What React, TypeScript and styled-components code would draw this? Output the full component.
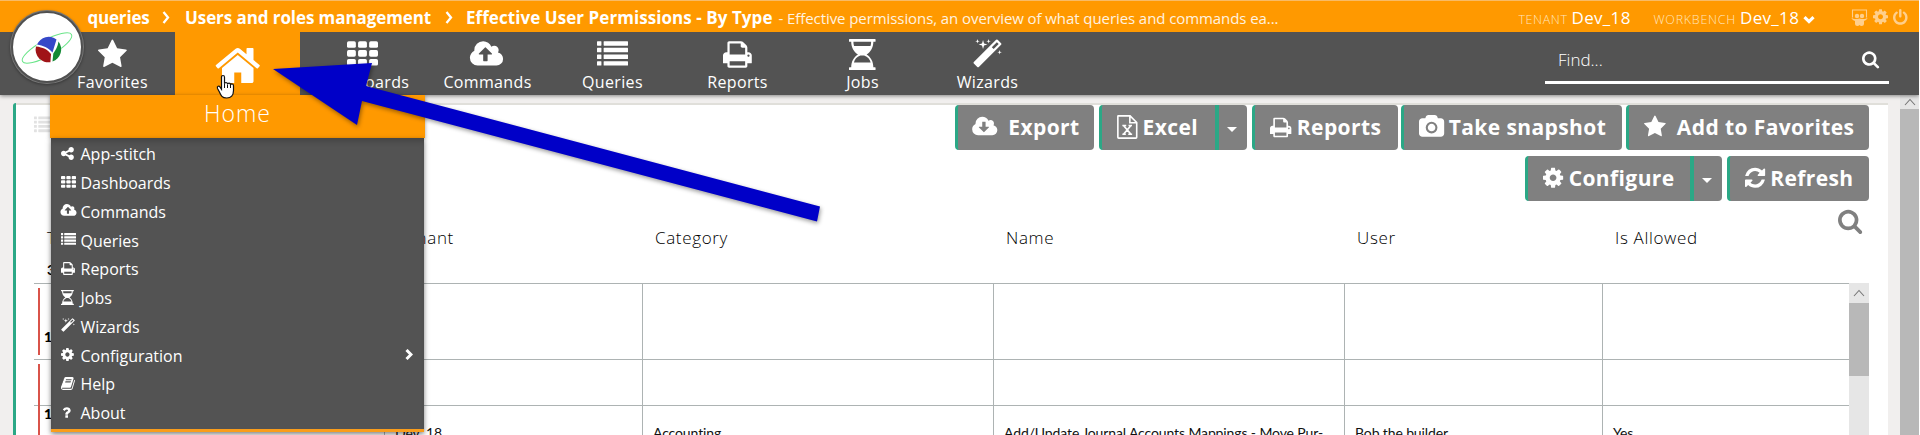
import React from "react";
import styled, { createGlobalStyle } from "styled-components";

const orange = "#ff9900";
const dark = "#535353";
const green = "#2ba886";
const line = "#adb3b3";

const GlobalStyle = createGlobalStyle`
  * { box-sizing: border-box; }
  body {
    margin: 0;
    overflow: hidden;
    background: #f1efee;
    font-family: "Open Sans", "Noto Sans", sans-serif;
  }
`;

/* ---------- icons ---------- */

type Glyph = { x: number; w: number; d: string };

const glyphs: Record<string, Glyph> = {
  star: { x: 64, w: 1664, d: "M1728 647q0 22-26 48l-363 354 86 500q1 7 1 20 0 21-10.500 35.500t-30.500 14.500q-19 0-40-12l-449-236-449 236q-22 12-40 12-21 0-31.500-14.500t-10.500-35.500q0-6 2-20l86-500-364-354q-25-27-25-48 0-37 56-46l502-73 225-455q19-41 49-41t49 41l225 455 502 73q56 9 56 46z" },
  search: { x: 64, w: 1664, d: "M1216 832q0-185-131.500-316.500t-316.500-131.500-316.500 131.500-131.500 316.500 131.500 316.500 316.500 131.500 316.500-131.500 131.500-316.500zm512 832q0 52-38 90t-90 38q-54 0-90-38l-343-342q-179 124-399 124-143 0-273.500-55.500t-225-150-150-225-55.500-273.500 55.500-273.500 150-225 225-150 273.500-55.500 273.500 55.500 225 150 150 225 55.500 273.500q0 220-124 399l343 343q37 37 37 90z" },
  cog: { x: 128, w: 1536, d: "M1152 896q0-106-75-181t-181-75-181 75-75 181 75 181 181 75 181-75 75-181zm512-109v222q0 12-8 23t-20 13l-185 28q-19 54-39 91 35 50 107 138 10 12 10 25t-9 23q-27 37-99 108t-94 71q-12 0-26-9l-138-108q-44 23-91 38-16 136-29 186-7 28-36 28h-222q-14 0-24.500-8.500t-11.500-21.500l-28-184q-49-16-90-37l-141 107q-10 9-25 9-14 0-25-11-126-114-165-168-7-10-7-23 0-12 8-23 15-21 51-66.500t54-70.500q-27-50-41-99l-183-27q-13-2-21-12.500t-8-23.500v-222q0-12 8-23t19-13l186-28q14-46 39-92-40-57-107-138-10-12-10-24 0-10 9-23 26-36 98.500-107.500t94.500-71.500q13 0 26 10l138 107q44-23 91-38 16-136 29-186 7-28 36-28h222q14 0 24.500 8.500t11.500 21.500l28 184q49 16 90 37l142-107q9-9 24-9 13 0 25 10 129 119 165 170 7 8 7 22 0 12-8 23-15 21-51 66.500t-54 70.500q26 50 41 98l183 28q13 2 21 12.500t8 23.500z" },
  home: { x: 64, w: 1664, d: "M1472 992v480q0 26-19 45t-45 19h-384v-384h-256v384h-384q-26 0-45-19t-19-45v-480q0-1 .5-3t.5-3l575-474 575 474q1 2 1 6zm223-69l-62 74q-8 9-21 11h-3q-13 0-21-7l-692-577-692 577q-12 8-24 7-13-2-21-11l-62-74q-8-10-7-23.500t11-21.500l719-599q32-26 76-26t76 26l244 204v-195q0-14 9-23t23-9h192q14 0 23 9t9 23v408l219 182q10 8 11 21.500t-7 23.500z" },
  power: { x: 128, w: 1536, d: "M1664 896q0 156-61 298t-164 245-245 164-298 61-298-61-245-164-164-245-61-298q0-182 80.500-343t226.500-270q43-32 95.500-25t83.500 50q32 42 24.500 94.500t-49.500 84.500q-98 74-151.500 181t-53.500 228q0 104 40.500 198.500t109.500 163.500 163.500 109.500 198.500 40.500 198.500-40.500 163.500-109.500 109.500-163.500 40.500-198.500q0-121-53.500-228t-151.500-181q-42-32-49.500-84.500t24.500-94.500q31-43 84-50t95 25q146 109 226.500 270t80.500 343zm-640-768v640q0 52-38 90t-90 38-90-38-38-90v-640q0-52 38-90t90-38 90 38 38 90z" },
  refresh: { x: 128, w: 1536, d: "M1639 1056q0 5-1 7-64 268-268 434.500t-478 166.500q-146 0-282.500-55t-243.500-157l-129 129q-19 19-45 19t-45-19-19-45v-448q0-26 19-45t45-19h448q26 0 45 19t19 45-19 45l-137 137q71 66 161 102t187 36q134 0 250-65t186-179q11-17 53-117 8-23 30-23h192q13 0 22.500 9.500t9.500 22.500zm25-800v448q0 26-19 45t-45 19h-448q-26 0-45-19t-19-45 19-45l138-138q-148-137-349-137-134 0-250 65t-186 179q-11 17-53 117-8 23-30 23h-199q-13 0-22.500-9.500t-9.500-22.500v-7q65-268 270-434.500t480-166.500q146 0 284 55.500t245 156.500l130-129q19-19 45-19t45 19 19 45z" },
  share: { x: 128, w: 1536, d: "M1344 1024q133 0 226.500 93.500t93.500 226.500-93.500 226.500-226.500 93.500-226.500-93.500-93.500-226.500q0-12 2-34l-360-180q-92 86-218 86-133 0-226.500-93.500t-93.500-226.500 93.500-226.500 226.500-93.500q126 0 218 86l360-180q-2-22-2-34 0-133 93.500-226.500t226.500-93.500 226.500 93.500 93.500 226.500-93.500 226.500-226.500 93.500q-126 0-218-86l-360 180q2 22 2 34t-2 34l360 180q92-86 218-86z" },
  print: { x: 64, w: 1664, d: "M448 1536h896v-256h-896v256zm0-640h896v-384h-160q-40 0-68-28t-28-68v-160h-640v640zm1152 64q0-26-19-45t-45-19-45 19-19 45 19 45 45 19 45-19 19-45zm128 0v416q0 13-9.500 22.500t-22.500 9.500h-224v160q0 40-28 68t-68 28h-960q-40 0-68-28t-28-68v-160h-224q-13 0-22.500-9.500t-9.500-22.500v-416q0-79 56.500-135.500t135.500-56.500h64v-544q0-40 28-68t68-28h672q40 0 88 20t76 48l152 152q28 28 48 76t20 88v256h64q79 0 135.500 56.500t56.500 135.500z" },
  cloudUp: { x: 0, w: 1856, d: "M1216 864q0-14-9-23l-352-352q-9-9-23-9t-23 9l-351 351q-10 12-10 24 0 14 9 23t23 9h224v352q0 13 9.500 22.500t22.500 9.500h192q13 0 22.500-9.500t9.500-22.500v-352h224q13 0 22.500-9.500t9.500-22.500zm640 288q0 159-112.500 271.500t-271.500 112.500h-1088q-185 0-316.500-131.500t-131.500-316.500q0-130 70-240t188-165q-2-30-2-43 0-212 150-362t362-150q156 0 285.500 87t188.500 231q71-62 166-62 106 0 181 75t75 181q0 76-41 138 130 31 213.500 135.500t83.500 238.500z" },
  cloudDown: { x: 0, w: 1856, d: "M1216 928q0-14-9-23t-23-9h-224v-352q0-13-9.500-22.500t-22.500-9.500h-192q-13 0-22.500 9.500t-9.500 22.500v352h-224q-13 0-22.500 9.500t-9.500 22.500q0 14 9 23l352 352q9 9 23 9t23-9l351-351q10-12 10-24zm640 224q0 159-112.500 271.500t-271.500 112.500h-1088q-185 0-316.500-131.500t-131.500-316.500q0-130 70-240t188-165q-2-30-2-43 0-212 150-362t362-150q156 0 285.500 87t188.500 231q71-62 166-62 106 0 181 75t75 181q0 76-41 138 130 31 213.500 135.500t83.500 238.500z" },
  magic: { x: 60, w: 1668, d: "M1254 581l293-293-107-107-293 293zm447-293q0 27-18 45l-1286 1286q-18 18-45 18t-45-18l-198-198q-18-18-18-45t18-45l1286-1286q18-18 45-18t45 18l198 198q18 18 18 45zm-1351-190l98 30-98 30-30 98-30-98-98-30 98-30 30-98zm350 162l196 60-196 60-60 196-60-196-196-60 196-60 60-196zm930 478l98 30-98 30-30 98-30-98-98-30 98-30 30-98zm-640-640l98 30-98 30-30 98-30-98-98-30 98-30 30-98z" },
  camera: { x: -64, w: 1920, d: "M896 672q119 0 203.500 84.500t84.500 203.500-84.500 203.500-203.500 84.500-203.500-84.500-84.500-203.500 84.500-203.500 203.500-84.500zm704-416q106 0 181 75t75 181v896q0 106-75 181t-181 75h-1408q-106 0-181-75t-75-181v-896q0-106 75-181t181-75h224l51-136q19-49 69.500-84.500t103.500-35.500h512q53 0 103.500 35.500t69.500 84.500l51 136h224zm-704 1152q185 0 316.500-131.500t131.500-316.500-131.500-316.500-316.500-131.500-316.500 131.500-131.500 316.500 131.500 316.500 316.500 131.500z" },
  book: { x: 64, w: 1664, d: "M1703 478q40 57 18 129l-275 906q-19 64-76.500 107.500t-122.500 43.500h-923q-77 0-148.500-53.500t-99.500-131.500q-24-67-2-127 0-4 3-27t4-37q1-8-3-21.500t-3-19.500q2-11 8-21t16.500-23.500 16.500-23.500q23-38 45-91.500t30-91.500q3-10 .5-30t-.5-28q3-11 17-28t17-23q21-36 42-92t25-90q1-9-2.500-32t.5-28q4-13 22-30.500t22-22.500q19-26 42.500-84.500t27.500-96.500q1-8-3-25.500t-2-26.500q2-8 9-18t18-23 17-21q8-12 16.500-30.500t15-35 16-36 19.500-32 26.500-23.500 36-11.500 47.500 5.500l-1 3q38-9 51-9h761q74 0 114 56t18 130l-274 906q-36 119-71.500 153.500t-128.500 34.500h-869q-27 0-38 15-11 16-1 43 24 70 144 70h923q29 0 56-15.500t35-41.500l300-987q7-22 5-57 38 15 59 43zm-1064 2q-4 13 2 22.500t20 9.500h608q13 0 25.500-9.500t16.500-22.500l21-64q4-13-2-22.500t-20-9.500h-608q-13 0-25.500 9.500t-16.500 22.500zm-83 256q-4 13 2 22.500t20 9.500h608q13 0 25.500-9.500t16.500-22.500l21-64q4-13-2-22.500t-20-9.500h-608q-13 0-25.500 9.500t-16.500 22.500z" },
  question: { x: 250, w: 1300, d: "M1088 1256v240q0 16-12 28t-28 12h-240q-16 0-28-12t-12-28v-240q0-16 12-28t28-12h240q16 0 28 12t12 28zm316-600q0 54-15.500 101t-35 76.500-55 59.500-57.500 43.500-61 35.500q-41 23-68.500 65t-27.500 67q0 17-12 32.500t-28 15.500h-240q-15 0-25.500-18.500t-10.500-37.500v-45q0-83 65-156.500t143-108.500q59-27 84-56t25-76q0-42-46.500-74t-107.500-32q-65 0-108 29-35 25-107 115-13 16-31 16-12 0-25-8l-164-125q-13-10-15.500-25t5.500-28q160-266 464-266 80 0 161 31t146 83 106 127.500 41 158.500z" },
};

const Svg = styled.svg`
  display: block;
  flex: none;
  overflow: visible;
  fill: currentColor;
`;

function Icon({ name, size }: { name: string; size: number }) {
  if (name === "th" || name === "list") {
    const rowsY = name === "th" ? [128, 640, 1152] : [128, 512, 896, 1280];
    return (
      <Svg width={size} height={size} viewBox="0 0 1792 1792">
        {rowsY.map((y) =>
          name === "th" ? (
            [0, 640, 1280].map((x) => <rect key={`${x}-${y}`} x={x} y={y} width="512" height="384" rx="96" />)
          ) : (
            <React.Fragment key={y}>
              <rect x="0" y={y} width="256" height="256" rx="32" />
              <rect x="384" y={y} width="1408" height="256" rx="32" />
            </React.Fragment>
          )
        )}
      </Svg>
    );
  }
  if (name === "hourglass") {
    return (
      <Svg width={(size * 1536) / 1792} height={size} viewBox="0 0 1536 1792">
        <path
          fillRule="evenodd"
          d="M32 0h1472q32 0 32 32v96q0 32-32 32h-96c0 330-150 590-390 736 240 146 390 406 390 736h96q32 0 32 32v96q0 32-32 32H32q-32 0-32-32v-96q0-32 32-32h96c0-330 150-590 390-736C278 750 128 490 128 160H32q-32 0-32-32V32Q0 0 32 0zM256 160c0 90 12 160 36 240h952c24-80 36-150 36-240zM660 960c-220 90-330 220-376 400h968c-46-180-156-310-376-400z"
        />
      </Svg>
    );
  }
  if (name === "excel") {
    return (
      <Svg width={(size * 1536) / 1792} height={size} viewBox="0 0 1536 1792">
        <path
          d="M96 64h880l496 496v1104q0 64-64 64H128q-64 0-64-64V96q0-32 32-32zM960 64v512h512"
          fill="none"
          stroke="currentColor"
          strokeWidth="120"
        />
        <path
          d="M500 800L1030 1420M1030 800L500 1420M400 785h290M860 785h260M400 1435h260M840 1435h290"
          fill="none"
          stroke="currentColor"
          strokeWidth="125"
        />
      </Svg>
    );
  }
  const g = glyphs[name];
  return (
    <Svg width={(size * g.w) / 1792} height={size} viewBox={`${g.x} 0 ${g.w} 1792`}>
      <path d={g.d} />
    </Svg>
  );
}

function Slideshare() {
  return (
    <Svg width="17" height="17" viewBox="0 0 17 17">
      <path d="M1.500 8.500V1h14v7.500" fill="none" stroke="currentColor" strokeWidth="1.100" />
      <circle cx="6" cy="7" r="2.200" />
      <circle cx="11" cy="7" r="2.200" />
      <path d="M.3 8.800c2.300 1.500 4.700 1.500 8.200.7 3.500.8 5.900.8 8.200-.7-.8 1.900-2.400 2.900-3.700 3.200V15q-.2 2-2.200 2-1.600 0-2.300-1Q7.800 17 6.200 17 4.200 17 4 15v-3C2.700 11.700 1.100 10.700.3 8.800z" />
    </Svg>
  );
}

/* ---------- header ---------- */

const Header = styled.header`
  position: relative;
  z-index: 2;
  width: 1919px;
  box-shadow: 0 1px 4px rgba(0, 0, 0, 0.45);
`;

const TopBar = styled.div`
  display: flex;
  align-items: center;
  height: 32px;
  padding: 1px 11px 0 87.5px;
  border-top: 1px solid #f8bb66;
  background: ${orange};
  color: #fff;
`;

const Crumb = styled.span<{ $w: number; $track?: number }>`
  width: ${(p) => p.$w}px;
  font-size: 17px;
  font-weight: 700;
  white-space: nowrap;
  letter-spacing: ${(p) => p.$track ?? 0}px;
`;

const CrumbArrow = styled.svg<{ $gap: number }>`
  width: 8px;
  height: 13px;
  margin: 0 ${(p) => p.$gap}px 0 11px;
  fill: none;
  stroke: #fff;
  stroke-width: 2.3;
`;

const Description = styled.span`
  flex: 1;
  margin-left: 5.5px;
  padding-top: 1px;
  font-size: 15px;
  letter-spacing: -0.08px;
  white-space: nowrap;
  color: #fff3e0;
`;

const Context = styled.div<{ $w: number }>`
  display: flex;
  align-items: baseline;
  gap: 4px;
  width: ${(p) => p.$w}px;
  font-size: 17px;
  letter-spacing: 0.3px;
  white-space: nowrap;
`;

const ContextLabel = styled.span<{ $track: number }>`
  font-size: 12.5px;
  font-weight: 300;
  letter-spacing: ${(p) => p.$track}px;
  color: #ffe4bd;
`;

const DownArrow = styled.svg`
  width: 12px;
  height: 8px;
  fill: none;
  stroke: #fff;
  stroke-width: 3.2;
`;

const Tools = styled.div`
  display: flex;
  align-items: center;
  gap: 5px;
  color: #ffcf8c;
`;

const NavBar = styled.nav`
  display: flex;
  height: 63px;
  padding-left: 50px;
  background: ${dark};
  color: #fff;
`;

const NavItem = styled.div`
  display: flex;
  flex-direction: column;
  align-items: center;
  width: 125px;
  padding-top: 7px;
  font-size: 16px;
  line-height: 24px;
  letter-spacing: 0.35px;
`;

const HomeItem = styled.div`
  position: relative;
  display: flex;
  justify-content: center;
  width: 125px;
  padding-top: 9px;
  background: ${orange};
`;

const Dropdown = styled.div`
  position: absolute;
  top: 63px;
  left: -125px;
  width: 375px;
`;

const DropdownTitle = styled.div`
  height: 43px;
  background: ${orange};
  font-size: 23px;
  font-weight: 300;
  line-height: 36px;
  letter-spacing: 1px;
  text-align: center;
  box-shadow: 0 1px 4px rgba(0, 0, 0, 0.4);
`;

const Menu = styled.ul`
  height: 294px;
  margin: 0 1px;
  padding: 2px 0 0;
  list-style: none;
  background: ${dark};
  border-bottom: 3px solid #f99d1c;
  box-shadow: 0 2px 5px rgba(0, 0, 0, 0.5), inset 0 6px 6px -3px rgba(0, 0, 0, 0.2);
`;

const MenuItem = styled.li`
  display: flex;
  align-items: center;
  height: 28.75px;
  padding: 0 11px 0 10px;
  font-size: 16px;
`;

const MenuIcon = styled.span`
  width: 19.5px;
  margin-top: -2px;
`;

const MenuLabel = styled.span`
  flex: 1;
`;

const SubArrow = styled.svg`
  width: 8px;
  height: 11px;
  margin-top: -3px;
  fill: none;
  stroke: #fff;
  stroke-width: 3;
`;

const SearchBox = styled.div`
  display: flex;
  align-items: center;
  justify-content: space-between;
  width: 344px;
  height: 47px;
  margin: 5px 30px 0 auto;
  padding: 0 10px 0 13px;
  border-bottom: 3px solid #fff;
  font-size: 17px;
  font-weight: 300;
`;

const Logo = styled.div`
  position: absolute;
  z-index: 4;
  top: 11px;
  left: 11px;
  width: 72px;
  height: 72px;
  border: 2px solid #505050;
  border-radius: 50%;
  background: #fff;
  box-shadow: 0 0 0 1px #777, 0 1px 3px 1px rgba(0, 0, 0, 0.35);
`;

const menuItems: [string, string][] = [
  ["share", "App-stitch"],
  ["th", "Dashboards"],
  ["cloudUp", "Commands"],
  ["list", "Queries"],
  ["print", "Reports"],
  ["hourglass", "Jobs"],
  ["magic", "Wizards"],
  ["cog", "Configuration"],
  ["book", "Help"],
  ["question", "About"],
];

const navItems: [string, string][] = [
  ["th", "Dashboards"],
  ["cloudUp", "Commands"],
  ["list", "Queries"],
  ["print", "Reports"],
  ["hourglass", "Jobs"],
  ["magic", "Wizards"],
];

/* ---------- page ---------- */

const Page = styled.div`
  position: relative;
  width: 1920px;
  height: 435px;
  overflow: hidden;
  border-right: 1px solid #fff;
`;

const Body = styled.div`
  display: flex;
  height: 340px;
  padding-left: 13px;
`;

const Panel = styled.main`
  width: 1875px;
  height: 332px;
  margin-top: 8px;
  border-left: 3px solid ${green};
  border-top-left-radius: 3px;
  background: #fff;
`;

const PanelEdge = styled.div`
  height: 2px;
  background: #e0dfda;
`;

const PanelTop = styled.div`
  display: flex;
  justify-content: space-between;
  height: 98px;
  padding: 0 19px 0 18px;
`;

const PanelMark = styled.div`
  padding-top: 10px;
  color: #e2e2e2;
`;

const Toolbar = styled.div`
  display: flex;
  flex-direction: column;
  align-items: flex-end;
  gap: 6px;
`;

const ToolRow = styled.div`
  display: flex;
`;

const Button = styled.div<{ $w: number; $gap: number; $ml?: number; $split?: boolean }>`
  display: flex;
  align-items: center;
  gap: ${(p) => p.$gap}px;
  width: ${(p) => p.$w}px;
  height: 45px;
  margin-left: ${(p) => p.$ml ?? 5}px;
  padding: 0 0 1px 14.5px;
  border-left: 3px solid ${green};
  border-radius: ${(p) => (p.$split ? "4px 0 0 4px" : "4px")};
  background: #808080;
  color: #fff;
  font-size: 21px;
  font-weight: 700;
  letter-spacing: 0.4px;
  white-space: nowrap;
`;

const Caret = styled.div`
  display: flex;
  align-items: center;
  justify-content: center;
  width: 32px;
  height: 45px;
  border-left: 4px solid ${green};
  border-radius: 0 4px 4px 0;
  background: #808080;

  &::after {
    content: "";
    margin: 3px 2px 0 0;
    border: 5px solid transparent;
    border-top-color: #fff;
    border-bottom: 0;
  }
`;

const columns = "350px 258px 351px 351px 258px 1fr";

const HeadRow = styled.div`
  display: grid;
  grid-template-columns: ${columns};
  height: 80px;
  padding: 0 19px 0 18px;
  color: #000;
`;

const HeadCell = styled.div`
  display: flex;
  justify-content: space-between;
  padding: 23px 0 0 13px;
  font-size: 17px;
  font-weight: 300;
  line-height: 23px;
  letter-spacing: 0.65px;
`;

const Count = styled.span`
  display: block;
  margin-top: 11px;
  font: 700 14px/20px Lato, sans-serif;
  color: #000;
`;

const Filter = styled.span`
  margin: -18px 7px 0 0;
  color: #808080;
`;

const Table = styled.div`
  display: flex;
  height: 152px;
  margin: 0 19px 0 18px;
`;

const Rows = styled.div`
  width: 1815px;
`;

const Row = styled.div<{ $h: number }>`
  display: grid;
  grid-template-columns: ${columns};
  height: ${(p) => p.$h}px;
  border-top: 1px solid ${line};
`;

const Cell = styled.div`
  padding: 18px 0 0 10px;
  border-left: 1px solid ${line};
  font: 14px/18px Lato, "Open Sans", sans-serif;
  letter-spacing: -0.12px;
  white-space: nowrap;
  color: #111;

  &:first-child {
    padding: 0;
    border-left: 0;
  }
`;

const Group = styled.div<{ $h: number; $pad: number }>`
  height: ${(p) => p.$h}px;
  margin: 4px 0 0 4px;
  padding: ${(p) => p.$pad}px 0 0 4px;
  border-left: 2px solid #d9534a;
  font-weight: 900;
  color: #000;
`;

const ScrollTrack = styled.div<{ $w: number; $edge?: boolean }>`
  width: ${(p) => p.$w}px;
  margin-left: ${(p) => (p.$edge ? "12px" : 0)};
  background: #e6e6e6;
`;

const ScrollArrow = styled.div<{ $h: number }>`
  display: flex;
  align-items: center;
  justify-content: center;
  height: ${(p) => p.$h}px;
`;

const ScrollThumb = styled.div<{ $h: number }>`
  height: ${(p) => p.$h}px;
  background: #b8b8b8;
`;

/* ---------- annotations drawn over the page ---------- */

const Pointer = styled.svg`
  position: absolute;
  z-index: 5;
  top: 0;
  left: 0;
  width: 840px;
  height: 240px;
  filter: drop-shadow(1px 2px 2px rgba(0, 0, 0, 0.4));
`;

const HandCursor = styled.svg`
  position: absolute;
  z-index: 5;
  top: 74px;
  left: 216px;
  width: 20px;
  height: 26px;
`;

function Up() {
  return (
    <svg width="12" height="8" viewBox="0 0 12 8" fill="none" stroke="#777" strokeWidth="1.100">
      <path d="M1 7l5-5.500L11 7" />
    </svg>
  );
}

function Brand() {
  return (
    <Logo>
      <svg width="68" height="68" viewBox="13 13 68 68">
        <ellipse cx="47" cy="48" rx="28" ry="8" transform="rotate(-29 47 48)" fill="none" stroke="#6be58a" strokeWidth="1" />
        <circle cx="48.500" cy="49.500" r="12.800" fill="#fff" />
        <path d="M37 44.500a12.800 12.800 0 0 1 19.500-5L52.500 52.500C48 47.500 43 45.500 37 44.500z" fill="#3548c8" />
        <path d="M36 46.500c7 .8 11.500 3 15 7.500l-.6 8.200A12.800 12.800 0 0 1 36 46.500z" fill="#a01418" />
        <path d="M58.500 41.500a12.800 12.800 0 0 1-6 20l.8-8c2.500-3.500 4.500-7 5.200-12z" fill="#148a35" />
      </svg>
    </Logo>
  );
}

export default function App() {
  return (
    <Page>
      <GlobalStyle />
      <Header>
        <TopBar>
          <Crumb $w={63} $track={-0.2}>queries</Crumb>
          <CrumbArrow $gap={15.5} viewBox="0 0 8 13"><path d="M1.500 1l4.500 5.500L1.500 12" /></CrumbArrow>
          <Crumb $w={248.5} $track={-0.08}>Users and roles management</Crumb>
          <CrumbArrow $gap={13.5} viewBox="0 0 8 13"><path d="M1.500 1l4.500 5.500L1.500 12" /></CrumbArrow>
          <Crumb $w={307} $track={0.06}>Effective User Permissions - By Type</Crumb>
          <Description>- Effective permissions, an overview of what queries and commands ea...</Description>
          <Context $w={135}>
            <ContextLabel $track={0.6}>TENANT</ContextLabel>Dev_18
          </Context>
          <Context $w={198}>
            <ContextLabel $track={0.75}>WORKBENCH</ContextLabel>Dev_18
            <DownArrow viewBox="0 0 12 8"><path d="M1.500 1.200L6 5.600l4.500-4.400" /></DownArrow>
          </Context>
          <Tools>
            <Slideshare />
            <Icon name="cog" size={17.5} />
            <Icon name="power" size={17} />
          </Tools>
        </TopBar>
        <NavBar>
          <NavItem>
            <Icon name="star" size={31} />
            <span>Favorites</span>
          </NavItem>
          <HomeItem>
            <Icon name="home" size={49} />
            <Dropdown>
              <DropdownTitle>Home</DropdownTitle>
              <Menu>
                {menuItems.map(([icon, label]) => (
                  <MenuItem key={label}>
                    <MenuIcon><Icon name={icon} size={15} /></MenuIcon>
                    <MenuLabel>{label}</MenuLabel>
                    {label === "Configuration" && (
                      <SubArrow viewBox="0 0 8 11"><path d="M1.500 1l4.500 4.500L1.500 10" /></SubArrow>
                    )}
                  </MenuItem>
                ))}
              </Menu>
            </Dropdown>
          </HomeItem>
          {navItems.map(([icon, label]) => (
            <NavItem key={label}>
              <Icon name={icon} size={31} />
              <span>{label}</span>
            </NavItem>
          ))}
          <SearchBox>
            <span>Find...</span>
            <Icon name="search" size={18.5} />
          </SearchBox>
        </NavBar>
        <Brand />
      </Header>

      <Body>
        <Panel>
          <PanelEdge />
          <PanelTop>
            <PanelMark><Icon name="list" size={20} /></PanelMark>
            <Toolbar>
              <ToolRow>
                <Button $w={139} $gap={11.5}><Icon name="cloudDown" size={23.5} />Export</Button>
                <Button $w={116} $gap={5.5} $split><Icon name="excel" size={24} />Excel</Button>
                <Caret />
                <Button $w={146} $gap={6}><Icon name="print" size={23} />Reports</Button>
                <Button $w={221} $gap={5} $ml={3}><Icon name="camera" size={23.5} />Take snapshot</Button>
                <Button $w={243} $gap={11.5} $ml={4}><Icon name="star" size={23.5} />Add to Favorites</Button>
              </ToolRow>
              <ToolRow>
                <Button $w={165} $gap={6} $split><Icon name="cog" size={23.5} />Configure</Button>
                <Caret />
                <Button $w={142} $gap={5.5}><Icon name="refresh" size={23.5} />Refresh</Button>
              </ToolRow>
            </Toolbar>
          </PanelTop>
          <HeadRow>
            <HeadCell>
              <div>
                Type
                <Count>3</Count>
              </div>
            </HeadCell>
            <HeadCell>Tenant</HeadCell>
            <HeadCell>Category</HeadCell>
            <HeadCell>Name</HeadCell>
            <HeadCell>User</HeadCell>
            <HeadCell>
              Is Allowed
              <Filter><Icon name="search" size={26} /></Filter>
            </HeadCell>
          </HeadRow>
          <Table>
            <Rows>
              <Row $h={76}>
                <Cell><Group $h={67} $pad={40}>1</Group></Cell>
                <Cell /><Cell /><Cell /><Cell /><Cell />
              </Row>
              <Row $h={46}>
                <Cell><Group $h={80} $pad={41}>1</Group></Cell>
                <Cell /><Cell /><Cell /><Cell /><Cell />
              </Row>
              <Row $h={60}>
                <Cell />
                <Cell>Dev_18</Cell>
                <Cell>Accounting</Cell>
                <Cell>Add/Update Journal Accounts Mappings - Move Pur-</Cell>
                <Cell>Bob the builder</Cell>
                <Cell>Yes</Cell>
              </Row>
            </Rows>
            <ScrollTrack $w={20}>
              <ScrollArrow $h={20}><Up /></ScrollArrow>
              <ScrollThumb $h={73} />
            </ScrollTrack>
          </Table>
        </Panel>
        <ScrollTrack $w={19} $edge>
          <ScrollArrow $h={14}><Up /></ScrollArrow>
          <ScrollThumb $h={330} />
        </ScrollTrack>
      </Body>

      <Pointer viewBox="0 0 840 240">
        <path d="M273 69L372 63 366 86 820 206.500 817 221.500 362 101 357 125z" fill="#0000c8" />
      </Pointer>
      <HandCursor viewBox="0 0 20 26">
        <path
          d="M5.500 3.200q0-1.700 1.500-1.700t1.500 1.700v6.600q.2-1.300 1.500-1.300t1.500 1.700q.3-1.100 1.500-1.100 1.400 0 1.500 1.600.4-.8 1.400-.8 1.600 0 1.600 1.900v4.700q0 3.700-1.800 5.700-1.500 1.800-5 1.800-3.300 0-4.800-1.700-1.400-1.600-2.600-4.500L1.500 14.500q-.6-1.700.6-2.200 1.100-.4 2 .8l1.400 2.100z"
          fill="#fff"
          stroke="#111"
          strokeWidth="1.200"
        />
        <path d="M8.500 10v4M11.500 10.500v3.500M14.500 11v3" stroke="#111" strokeWidth="1" />
      </HandCursor>
    </Page>
  );
}
